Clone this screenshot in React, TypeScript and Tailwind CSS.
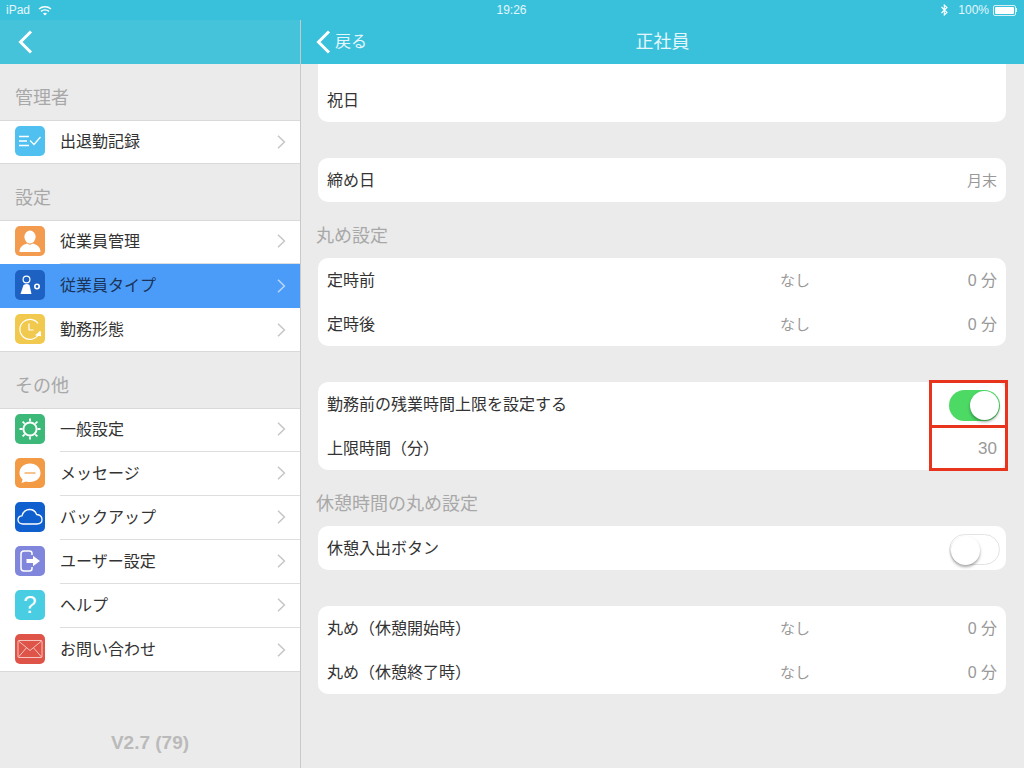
import React from 'react';

const Chevron = ({ light }: { light?: boolean }) => (
  <svg width="9" height="14" viewBox="0 0 9 14" fill="none" className="mr-[14px] -mt-px shrink-0">
    <path d="M1 0.8 L7.4 7 L1 13.2" stroke={light ? '#bcd6f7' : '#c6c6c6'} strokeWidth="1.5" />
  </svg>
);

const BackChevron = () => (
  <svg width="15" height="24" viewBox="0 0 15 24" fill="none" className="shrink-0">
    <path d="M13 1.5 L2.5 12 L13 22.5" stroke="#ffffff" strokeWidth="3" />
  </svg>
);

const IconBox = ({ color, children }: { color: string; children: React.ReactNode }) => (
  <div className={`w-[30px] h-[30px] -mt-[2px] rounded-[5px] flex items-center justify-center shrink-0 text-white ${color}`}>
    {children}
  </div>
);

const RecordIcon = () => (
  <svg width="24" height="16" viewBox="0 0 24 16" fill="none" stroke="#fff" strokeWidth="1.3">
    <path d="M1 3.5 H11 M1 8 H9 M1 12.5 H11" />
    <path d="M12 7.5 L16 11.5 L22.5 4" />
  </svg>
);

const PersonIcon = () => (
  <svg width="24" height="24" viewBox="0 0 24 24" fill="#fff">
    <ellipse cx="12" cy="8" rx="5.6" ry="6.4" />
    <path d="M1.5 23 C1.5 17 6 15.5 9 14.5 C11 16 13 16 15 14.5 C18 15.5 22.5 17 22.5 23 Z" />
  </svg>
);

const TypeIcon = () => (
  <svg width="24" height="24" viewBox="0 0 24 24" fill="none">
    <circle cx="8.5" cy="6.5" r="3.4" stroke="#fff" strokeWidth="1.2" />
    <path d="M5.5 12 C8 10.5 9.5 10.5 11.5 12 L13.5 21 H2.5 Z" fill="#fff" />
    <circle cx="19" cy="13.5" r="2.2" stroke="#fff" strokeWidth="1.6" />
  </svg>
);

const ClockIcon = () => (
  <svg width="24" height="24" viewBox="0 0 24 24" fill="none" stroke="#fff" strokeWidth="1.2">
    <path d="M20 6.5 A10 10 0 1 0 20.5 17.5" />
    <path d="M11 6.5 V13 H15.5" />
    <path d="M17.5 18 L22.5 18.5 L22 14" fill="#fff" />
  </svg>
);

const GearIcon = () => (
  <svg width="24" height="24" viewBox="0 0 24 24" fill="none" stroke="#fff">
    <circle cx="12" cy="12" r="6.6" strokeWidth="2" />
    <path
      d="M12 1.5 V4.5 M12 19.5 V22.5 M1.5 12 H4.5 M19.5 12 H22.5 M4.6 4.6 L6.7 6.7 M17.3 17.3 L19.4 19.4 M4.6 19.4 L6.7 17.3 M17.3 6.7 L19.4 4.6"
      strokeWidth="1.8"
    />
  </svg>
);

const MessageIcon = () => (
  <svg width="24" height="24" viewBox="0 0 24 24">
    <path d="M12 2.5 C18 2.5 22.5 6.5 22.5 12 C22.5 17.5 18 21 12 21 C10.5 21 9 20.8 8 20.4 L3.5 22 L4.6 18.4 C2.6 16.6 1.5 14.5 1.5 12 C1.5 6.5 6 2.5 12 2.5 Z" fill="#fff" />
    <path d="M6.5 12 H17.5" stroke="#f29a44" strokeWidth="1.2" />
  </svg>
);

const CloudIcon = () => (
  <svg width="26" height="20" viewBox="0 0 26 20" fill="none" stroke="#fff" strokeWidth="1.3">
    <path d="M6 17 C3 17 1 15.2 1 12.8 C1 10.5 2.8 8.9 5 8.8 C6 5 9 2.5 12.8 2.5 C16.2 2.5 18.6 4.8 19.6 7.5 C22.7 7.8 25 9.8 25 12.6 C25 15.2 23 17 20 17 Z" />
  </svg>
);

const ExitIcon = () => (
  <svg width="24" height="24" viewBox="0 0 24 24" fill="none">
    <path d="M14 6 V4.5 C14 3 13 2 11.5 2 H6 C4 2 3 3 3 5 V19 C3 21 4 22 6 22 H11.5 C13 22 14 21 14 19.5 V18" stroke="#fff" strokeWidth="1.5" />
    <path d="M8.5 10 H15 V6.8 L22 12 L15 17.2 V14 H8.5 Z" fill="#fff" />
  </svg>
);

const MailIcon = () => (
  <svg width="26" height="20" viewBox="0 0 26 20" fill="none" stroke="#f6c4bf" strokeWidth="1">
    <rect x="1" y="1.5" width="24" height="17" rx="1" />
    <path d="M1.5 2 L13 11.5 L24.5 2 M1.5 18 L9.5 8.8 M24.5 18 L16.5 8.8" />
  </svg>
);

type MenuItem = { label: string; icon: React.ReactNode; selected?: boolean };

const adminItems: MenuItem[] = [
  { label: '出退勤記録', icon: <IconBox color="bg-[#4fc0f0]"><RecordIcon /></IconBox> },
];

const settingItems: MenuItem[] = [
  { label: '従業員管理', icon: <IconBox color="bg-[#f39c50]"><PersonIcon /></IconBox> },
  { label: '従業員タイプ', icon: <IconBox color="bg-[#1d62c2]"><TypeIcon /></IconBox>, selected: true },
  { label: '勤務形態', icon: <IconBox color="bg-[#f2c94f]"><ClockIcon /></IconBox> },
];

const otherItems: MenuItem[] = [
  { label: '一般設定', icon: <IconBox color="bg-[#3cb878]"><GearIcon /></IconBox> },
  { label: 'メッセージ', icon: <IconBox color="bg-[#f29a44]"><MessageIcon /></IconBox> },
  { label: 'バックアップ', icon: <IconBox color="bg-[#0f5fcf]"><CloudIcon /></IconBox> },
  { label: 'ユーザー設定', icon: <IconBox color="bg-[#7f86dc]"><ExitIcon /></IconBox> },
  { label: 'ヘルプ', icon: <IconBox color="bg-[#48cde3]"><span className="text-[24px] leading-none">?</span></IconBox> },
  { label: 'お問い合わせ', icon: <IconBox color="bg-[#df5449]"><MailIcon /></IconBox> },
];

const SectionLabel = ({ children, className = '' }: { children: React.ReactNode; className?: string }) => (
  <div className={`h-14 pt-3 flex items-center text-[18px] text-[#a8a8a8] ${className}`}>{children}</div>
);

const MenuGroup = ({ items }: { items: MenuItem[] }) => (
  <div className="bg-white border-y border-[#d9d9d9]">
    <div className="-my-px">
      {items.map((item, i) => (
        <div key={item.label} className={`h-11 flex items-center pl-[15px] ${item.selected ? 'bg-[#4a9cf8]' : ''}`}>
          {item.icon}
          <div
            className={`ml-[15px] flex-1 h-full flex items-center justify-between text-[16px] ${
              item.selected ? 'text-[#1c3358]' : 'text-[#333333]'
            } ${i < items.length - 1 && !item.selected ? 'border-b border-[#dedede]' : ''}`}
          >
            <span>{item.label}</span>
            <Chevron light={item.selected} />
          </div>
        </div>
      ))}
    </div>
  </div>
);

const Switch = ({ on }: { on?: boolean }) => (
  <div
    className={`w-[51px] h-[31px] rounded-full p-px flex -mr-[3px] ${
      on ? 'bg-[#4cd964] justify-end' : 'bg-white border border-[#e4e4e4] justify-start'
    }`}
  >
    <div className="w-[29px] h-[29px] rounded-full bg-white shadow-[0_2px_3px_rgba(0,0,0,0.35)]" />
  </div>
);

const Card = ({ children, className = '' }: { children: React.ReactNode; className?: string }) => (
  <div className={`bg-white rounded-[10px] ${className}`}>{children}</div>
);

const Row = ({ children }: { children: React.ReactNode }) => (
  <div className="relative h-11 pt-[2px] flex items-center justify-between px-[9px] text-[16px] text-[#333333]">
    {children}
  </div>
);

const ValueRow = ({ label, mode, value }: { label: string; mode: string; value: string }) => (
  <Row>
    <span className="w-[453px] shrink-0">{label}</span>
    <span className="text-[15px] text-[#999999]">{mode}</span>
    <span className="ml-auto text-[16px] text-[#999999]">{value}</span>
  </Row>
);

export default function App() {
  return (
    <div className="w-[1024px] h-[768px] overflow-hidden flex flex-col bg-[#ebebeb] font-['Liberation_Sans','Noto_Sans_CJK_JP',sans-serif]">
      {/* status bar */}
      <div className="h-5 shrink-0 bg-[#39c1dc] flex items-center text-white text-[12px]">
        <div className="flex-1 flex items-center pl-[6px] gap-2 text-[#e4f6fa]">
          <span>iPad</span>
          <svg width="14" height="11" viewBox="0 0 14 11" fill="none" stroke="#fff" strokeWidth="1.5">
            <path d="M1 4 C4.5 1 9.5 1 13 4 M3 6.3 C5.3 4.4 8.7 4.4 11 6.3" />
            <path d="M5 8.4 C6.2 7.5 7.8 7.5 9 8.4 L7 10.5 Z" fill="#fff" stroke="none" />
          </svg>
        </div>
        <div className="text-[#e4f6fa]">19:26</div>
        <div className="flex-1 flex items-center justify-end pr-[7px] text-[#e4f6fa]">
          <svg width="7" height="12" viewBox="0 0 7 12" fill="none" stroke="#fff" strokeWidth="1.1" className="mr-[10px]">
            <path d="M0.5 3 L6 8.5 L3.3 11 V1 L6 3.5 L0.5 9" />
          </svg>
          <span>100%</span>
          <div className="ml-[4px] w-[23px] h-[11px] border border-[#d5f1f7] rounded-[2px] p-px">
            <div className="w-full h-full bg-white rounded-[1px]" />
          </div>
          <div className="w-px h-[4px] bg-[#d5f1f7]" />
        </div>
      </div>

      <div className="flex-1 flex min-h-0">
        {/* sidebar */}
        <div className="w-[301px] shrink-0 flex flex-col border-r border-[#c9c9c9]">
          <div className="h-11 shrink-0 bg-[#45c3da] flex items-center pl-[18px]">
            <BackChevron />
          </div>
          <SectionLabel className="pl-[15px]">管理者</SectionLabel>
          <MenuGroup items={adminItems} />
          <SectionLabel className="pl-[15px]">設定</SectionLabel>
          <MenuGroup items={settingItems} />
          <SectionLabel className="pl-[15px]">その他</SectionLabel>
          <MenuGroup items={otherItems} />
          <div className="mt-auto h-[50px] flex items-center justify-center text-[19px] font-bold text-[#bababa]">
            V2.7 (79)
          </div>
        </div>

        {/* detail */}
        <div className="flex-1 flex flex-col min-w-0">
          <div className="h-11 shrink-0 bg-[#39c1dc] grid grid-cols-[1fr_auto_1fr] items-center text-white">
            <div className="flex items-center pl-[15px] gap-[4px]">
              <BackChevron />
              <span className="text-[16px] text-[#e4f6fa]">戻る</span>
            </div>
            <div className="text-[18px] text-[#e4f6fa]">正社員</div>
            <div />
          </div>

          <div className="flex-1 pl-[17px] pr-[18px]">
            <div className="bg-white rounded-b-[10px] pt-[14px]">
              <Row>祝日</Row>
            </div>

            <Card className="mt-9">
              <Row>
                <span>締め日</span>
                <span className="text-[15px] text-[#999999]">月末</span>
              </Row>
            </Card>

            <SectionLabel className="-ml-[2px]">丸め設定</SectionLabel>
            <Card>
              <ValueRow label="定時前" mode="なし" value="0 分" />
              <ValueRow label="定時後" mode="なし" value="0 分" />
            </Card>

            <Card className="mt-9">
              <Row>
                <span>勤務前の残業時間上限を設定する</span>
                <Switch on />
                <div className="absolute -top-[2px] -bottom-[2px] -right-[2px] w-[79px] border-[3px] border-[#e8341c]" />
              </Row>
              <Row>
                <span>上限時間（分）</span>
                <span className="text-[#999999] text-[17px]">30</span>
                <div className="absolute -top-px -bottom-px -right-[2px] w-[79px] border-[3px] border-[#e8341c]" />
              </Row>
            </Card>

            <SectionLabel className="-ml-[2px]">休憩時間の丸め設定</SectionLabel>
            <Card>
              <Row>
                <span>休憩入出ボタン</span>
                <Switch />
              </Row>
            </Card>

            <Card className="mt-9">
              <ValueRow label="丸め（休憩開始時）" mode="なし" value="0 分" />
              <ValueRow label="丸め（休憩終了時）" mode="なし" value="0 分" />
            </Card>
          </div>
        </div>
      </div>
    </div>
  );
}
